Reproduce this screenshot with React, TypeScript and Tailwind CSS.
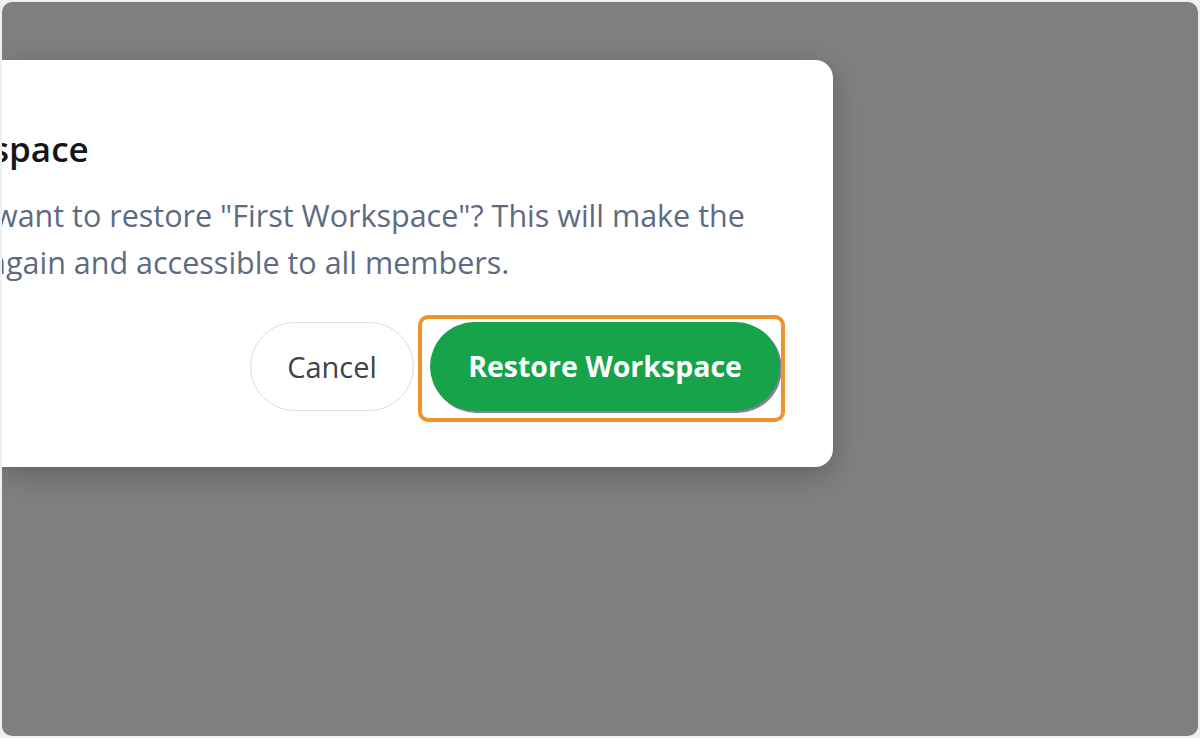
export default function App() {
  return (
    <div className="h-[738px] w-[1200px] bg-[#eef0f5] p-[2px]">
      <div className="h-full w-full overflow-hidden rounded-[10px] bg-[#808080] pt-[58px]">
        <div
          className="w-[831px] rounded-r-[18px] bg-white pb-[56px] pt-[69px] shadow-[0_8px_30px_rgba(0,0,0,0.25)]"
          style={{ fontFamily: '"Open Sans", "Noto Sans", sans-serif' }}
        >
          <h2 className="ml-[-10px] whitespace-nowrap text-[35px] font-semibold leading-[40px] text-[#14161a]">
            space
          </h2>
          <div className="mt-[23px] text-[30.5px] leading-[47px] text-[#5d6b82]">
            <p className="ml-[-8px] whitespace-nowrap">
              want to restore "First Workspace"? This will make the
            </p>
            <p className="ml-[-13px] whitespace-nowrap">again and accessible to all members.</p>
          </div>
          <div className="mt-[36px] flex justify-end gap-4 pr-[53px]">
            <button className="h-[89px] w-[164px] rounded-full border border-[#dcdde1] bg-white text-[29px] text-[#3d434d]">
              Cancel
            </button>
            <div className="relative">
              <div className="pointer-events-none absolute -bottom-[11px] -left-[12px] -right-[5px] -top-[7px] rounded-[10px] border-[4px] border-[#f0932b]" />
              <button className="h-[89px] w-[350px] rounded-full bg-[#16a34a] text-[28.5px] font-bold text-white shadow-[2px_2px_0_rgba(60,40,90,0.6)]">
                Restore Workspace
              </button>
            </div>
          </div>
        </div>
      </div>
    </div>
  )
}
